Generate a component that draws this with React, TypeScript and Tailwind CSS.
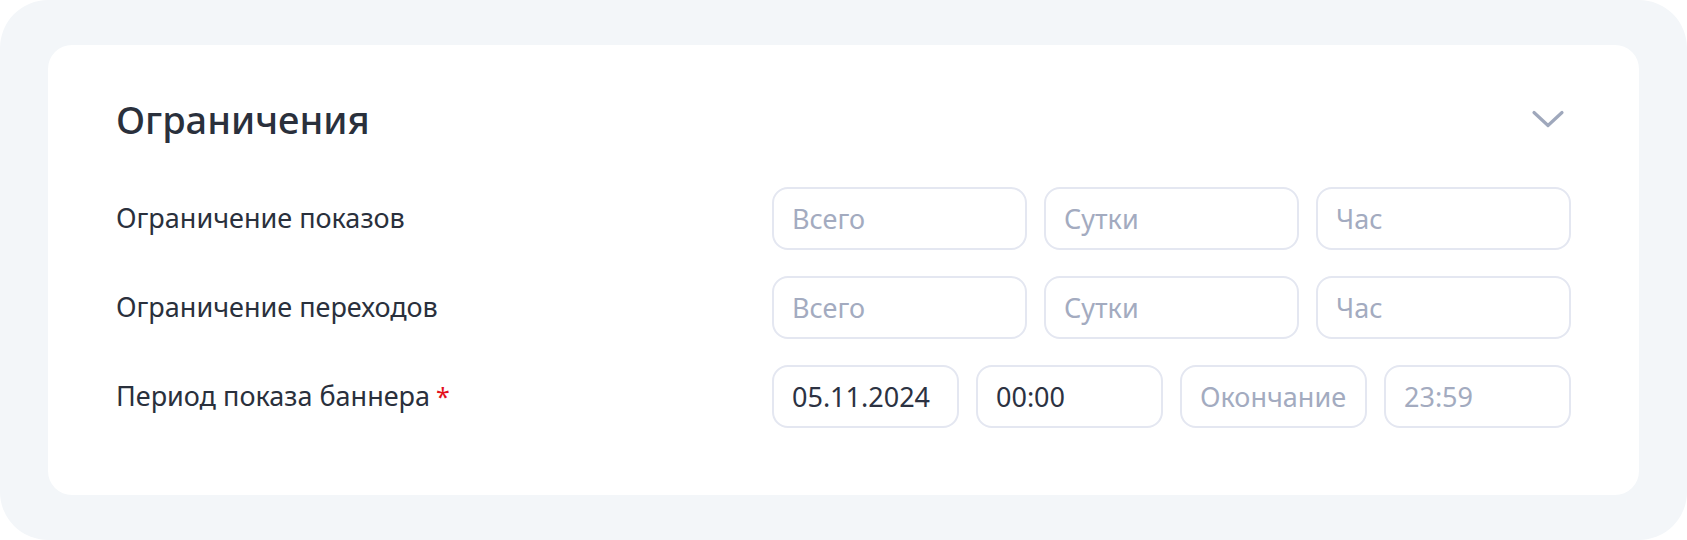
const font = { fontFamily: '"Noto Sans", "Open Sans", sans-serif' }

function Field({ placeholder, value }: { placeholder?: string; value?: string }) {
  return (
    <input
      readOnly
      defaultValue={value}
      placeholder={placeholder}
      className="h-[63px] w-full min-w-0 rounded-2xl border-2 border-[#e4e7f1] bg-white px-[18px] text-[27px] text-[#2c3242] outline-none placeholder:text-[#a3abc0]"
    />
  )
}

function Row({ label, required, children }: { label: string; required?: boolean; children: React.ReactNode }) {
  return (
    <div className="flex items-center justify-between">
      <span className="text-[27px] text-[#2a303c]">
        {label}
        {required && <span className="ml-[6px] text-[25px] text-[#e3101c]">*</span>}
      </span>
      {children}
    </div>
  )
}

function Chevron() {
  return (
    <svg width="34" height="20" viewBox="0 0 34 20" fill="none">
      <path d="M3 3.5 L17 16.5 L31 3.5" stroke="currentColor" strokeWidth="3.2" strokeLinecap="round" strokeLinejoin="round" />
    </svg>
  )
}

export default function App() {
  return (
    <div className="h-[540px] w-[1687px] bg-white" style={font}>
      <div className="h-[540px] rounded-[48px] bg-[#f3f6f9] px-[48px] py-[45px]">
        <section className="h-full rounded-3xl bg-white px-[68px] pt-[50px]">
          <div className="flex h-[48px] items-center justify-between">
            <h2 className="text-[38px] font-medium text-[#2a303c]">Ограничения</h2>
            <button className="mr-[6px] flex items-center text-[#9fa8bc]">
              <Chevron />
            </button>
          </div>

          <div className="mt-[44px] flex flex-col gap-[26px]">
            <Row label="Ограничение показов">
              <div className="grid w-[799px] grid-cols-3 gap-[17px]">
                <Field placeholder="Всего" />
                <Field placeholder="Сутки" />
                <Field placeholder="Час" />
              </div>
            </Row>
            <Row label="Ограничение переходов">
              <div className="grid w-[799px] grid-cols-3 gap-[17px]">
                <Field placeholder="Всего" />
                <Field placeholder="Сутки" />
                <Field placeholder="Час" />
              </div>
            </Row>
            <Row label="Период показа баннера" required>
              <div className="grid w-[799px] grid-cols-4 gap-[17px]">
                <Field value="05.11.2024" />
                <Field value="00:00" />
                <Field placeholder="Окончание" />
                <Field placeholder="23:59" />
              </div>
            </Row>
          </div>
        </section>
      </div>
    </div>
  )
}
